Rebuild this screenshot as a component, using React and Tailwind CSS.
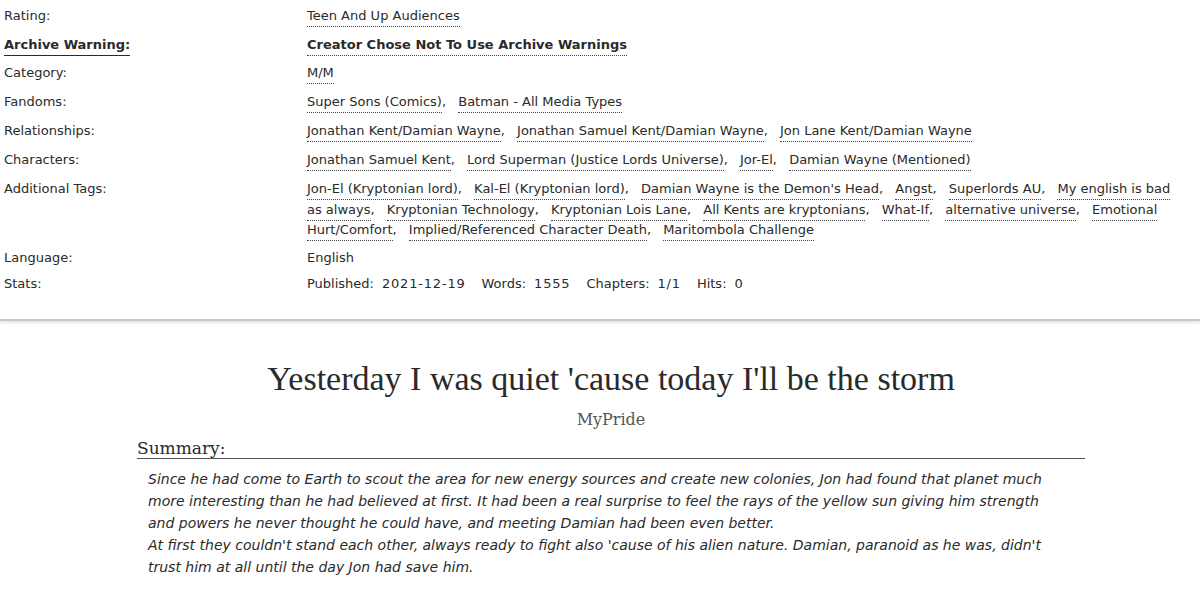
import React from "react";

const meta = [
  { label: "Rating:", tags: ["Teen And Up Audiences"], pb: "pb-[9px]" },
  {
    label: "Archive Warning:",
    tags: ["Creator Chose Not To Use Archive Warnings"],
    bold: true,
    pb: "pb-[8px]",
  },
  { label: "Category:", tags: ["M/M"], pb: "pb-[9px]" },
  {
    label: "Fandoms:",
    tags: ["Super Sons (Comics)", "Batman - All Media Types"],
    pb: "pb-[9px]",
  },
  {
    label: "Relationships:",
    tags: [
      "Jonathan Kent/Damian Wayne",
      "Jonathan Samuel Kent/Damian Wayne",
      "Jon Lane Kent/Damian Wayne",
    ],
    pb: "pb-[9px]",
  },
  {
    label: "Characters:",
    tags: [
      "Jonathan Samuel Kent",
      "Lord Superman (Justice Lords Universe)",
      "Jor-El",
      "Damian Wayne (Mentioned)",
    ],
    pb: "pb-[9px]",
  },
  {
    label: "Additional Tags:",
    tags: [
      "Jon-El (Kryptonian lord)",
      "Kal-El (Kryptonian lord)",
      "Damian Wayne is the Demon's Head",
      "Angst",
      "Superlords AU",
      "My english is bad as always",
      "Kryptonian Technology",
      "Kryptonian Lois Lane",
      "All Kents are kryptonians",
      "What-If",
      "alternative universe",
      "Emotional Hurt/Comfort",
      "Implied/Referenced Character Death",
      "Maritombola Challenge",
    ],
    pb: "pb-[7px]",
  },
];

const stats = [
  ["Published:", "2021-12-19"],
  ["Words:", "1555"],
  ["Chapters:", "1/1"],
  ["Hits:", "0"],
];

const TagList = ({ tags, bold }) => (
  <ul className="inline">
    {tags.map((t, i) => (
      <li key={t} className="inline">
        <a
          className={`pb-[3px] border-b border-dotted border-[#444] ${
            bold ? "font-bold" : ""
          }`}
        >
          {t}
        </a>
        {i < tags.length - 1 && <span className="mr-[8px]">,</span>}{" "}
      </li>
    ))}
  </ul>
);

const App = () => {
  return (
    <div className="min-h-[594px] bg-white text-[#2a2a2a]">
      {/* work meta */}
      <div
        className="pt-[6px] pb-[25px] border-b-2 border-[#c8c8c8] shadow-[0_2px_3px_#e4e4e4] text-[13px] leading-[20px]"
        style={{ fontFamily: '"DejaVu Sans", Verdana, sans-serif' }}
      >
        {meta.map((row) => (
          <div key={row.label} className={`flex ${row.pb}`}>
            <div className="w-[307px] shrink-0 pl-[4px]">
              {row.bold ? (
                <span className="font-bold pb-[3px] border-b border-[#2a2a2a]">
                  {row.label}
                </span>
              ) : (
                row.label
              )}
            </div>
            <div
              className={`flex-1 pr-[12px] ${
                row.tags.length > 6 ? "leading-[20.5px]" : ""
              }`}
            >
              <TagList tags={row.tags} bold={row.bold} />
            </div>
          </div>
        ))}
        <div className="flex pb-[6px]">
          <div className="w-[307px] shrink-0 pl-[4px]">Language:</div>
          <div className="flex-1">English</div>
        </div>
        <div className="flex">
          <div className="w-[307px] shrink-0 pl-[4px]">Stats:</div>
          <div className="flex-1 flex">
            {stats.map(([k, v]) => (
              <span key={k} className="mr-[16px]">
                {k}
                <span className="ml-[8px] tracking-[0.8px]">{v}</span>
              </span>
            ))}
          </div>
        </div>
      </div>

      {/* preface */}
      <div className="ml-[137px] w-[948px] pt-[38px]">
        <h2
          className="text-center text-[34px] leading-[40px] text-[#2a2a2a]"
          style={{ fontFamily: '"Liberation Serif", Georgia, serif' }}
        >
          Yesterday I was quiet 'cause today I'll be the storm
        </h2>
        <div
          className="text-center text-[16px] leading-[20px] text-[#555] mt-[11px]"
          style={{ fontFamily: '"DejaVu Serif", Georgia, serif' }}
        >
          MyPride
        </div>
        <h3
          className="mt-[8px] text-[17px] leading-[20px] border-b border-[#555]"
          style={{ fontFamily: '"DejaVu Serif", Georgia, serif' }}
        >
          Summary:
        </h3>
        <blockquote
          className="pl-[11px] pt-[9px] w-[920px] italic text-[14px] leading-[22px] text-[#2a2a2a]"
          style={{ fontFamily: '"DejaVu Sans", Verdana, sans-serif' }}
        >
          <p>
            Since he had come to Earth to scout the area for new energy sources
            and create new colonies, Jon had found that planet much more
            interesting than he had believed at first. It had been a real
            surprise to feel the rays of the yellow sun giving him strength and
            powers he never thought he could have, and meeting Damian had been
            even better.
            <br />
            At first they couldn't stand each other, always ready to fight also
            'cause of his alien nature. Damian, paranoid as he was, didn't
            trust him at all until the day Jon had save him.
          </p>
        </blockquote>
      </div>
    </div>
  );
};

export default App;
